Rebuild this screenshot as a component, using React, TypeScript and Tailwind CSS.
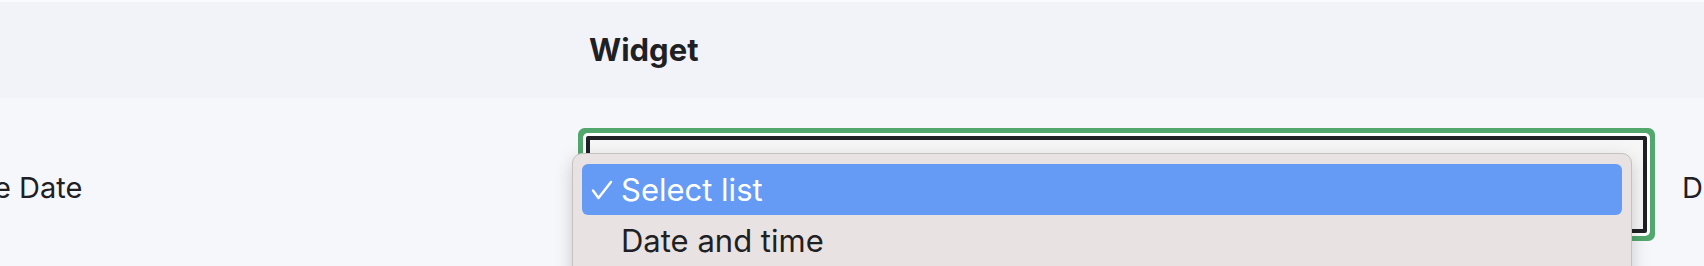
import { useState } from "react";

const font = { fontFamily: '"Inter", "Liberation Sans", sans-serif' };

const Check = () => (
  <svg width="22" height="20" viewBox="0 0 22 20" className="shrink-0">
    <path d="M2 10.5 L7.5 18 L20 2" fill="none" stroke="white" strokeWidth="2.4" strokeLinecap="round" strokeLinejoin="round" />
  </svg>
);

const WidgetMenu = ({ options, value }: { options: string[]; value: string }) => (
  <div className="absolute left-[-6px] top-[55px] z-10 h-[160px] w-[1060px] rounded-[10px] border border-[#c4c1c0] bg-[#e8e3e2] px-[9px] pt-[10px] shadow-[0_6px_18px_rgba(0,0,0,0.18)]">
    {options.map((opt) => {
      const active = opt === value;
      return (
        <div
          key={opt}
          className={
            active
              ? "flex h-[51px] items-center rounded-[6px] bg-[#659bf5] pl-[9px] text-white"
              : "flex h-[51px] items-center pl-[39px] text-[#1f2023]"
          }
        >
          {active && <Check />}
          <span className={active ? "ml-[8px] text-[31px] leading-none" : "text-[31px] leading-none"}>{opt}</span>
        </div>
      );
    })}
  </div>
);

export default function App() {
  const [value] = useState("Select list");

  return (
    <div className="h-[266px] w-[1704px] overflow-hidden bg-[#f6f7fb] text-[#1f2023]" style={font}>
      <div className="h-[2px] bg-[#f9fafc]" />
      <div className="flex h-[96px] items-center bg-[#f2f3f8]">
        <div className="w-[578px] shrink-0" />
        <div className="w-[1079px] shrink-0 pl-[11px] text-[31px] font-bold">Widget</div>
        <div className="flex-1" />
      </div>
      <div className="flex items-start">
        <div className="w-[578px] shrink-0 pt-[74px]">
          <span className="-ml-[6px] block text-[29px] leading-[32px] whitespace-nowrap">e Date</span>
        </div>
        <div className="relative w-[1079px] shrink-0 pt-[38px]">
          <div className="ml-[8px] h-[97px] w-[1061px] rounded-[2px] border-[4px] border-[#1f2024] bg-[#f6f6f6] shadow-[0_0_0_3px_#ffffff,0_0_0_8px_#52a76d]" />
          <WidgetMenu options={["Select list", "Date and time"]} value={value} />
        </div>
        <div className="pl-[25px] pt-[74px]">
          <span className="block text-[29px] leading-[32px] whitespace-nowrap">Date</span>
        </div>
      </div>
    </div>
  );
}
